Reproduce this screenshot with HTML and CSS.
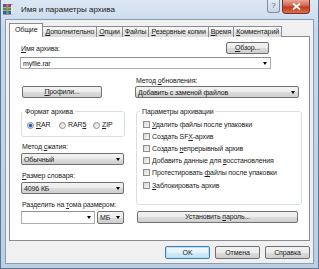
FILE: index.html
```html
<!DOCTYPE html>
<html lang="ru">

<head>
  <meta charset="UTF-8">
  <title>Имя и параметры архива</title>
  <link rel="stylesheet" href="styles.css">
</head>

<body>

  <div class="window">
    <div class="titlebar">
      <svg class="app-icon" width="11" height="11" viewBox="0 0 11 11">
        <rect x="0" y="0" width="10" height="3" fill="#8b3c9e"/>
        <rect x="0" y="3.5" width="10" height="3" fill="#3c9d3f"/>
        <rect x="0" y="7" width="10" height="3.5" fill="#2b5fbf"/>
        <rect x="8" y="0.5" width="2" height="10" fill="#e8e8e8"/>
        <rect x="3.5" y="0" width="2" height="11" fill="#b58a4a"/>
      </svg>
      <span class="title">Имя и параметры архива</span>
      <div class="caption-btns">
        <span class="cap-help">?</span>
        <span class="cap-close">
          <svg width="9" height="7" viewBox="0 0 9 7">
            <path d="M1 0.5 L8 6.5 M8 0.5 L1 6.5" stroke="#fff" stroke-width="1.8"/>
          </svg>
        </span>
      </div>
    </div>

    <div class="client">
      <div class="tabs">
        <span class="tab active">Общие</span>
        <span class="tab"><u>Д</u>ополнительно</span>
        <span class="tab"><u>О</u>пции</span>
        <span class="tab"><u>Ф</u>айлы</span>
        <span class="tab"><u>Р</u>езервные копии</span>
        <span class="tab"><u>В</u>ремя</span>
        <span class="tab"><u>К</u>омментарий</span>
      </div>

      <div class="page">
        <div class="name-row">
          <span class="lbl"><u>И</u>мя архива:</span>
          <span class="btn btn-browse"><u>О</u>бзор...</span>
        </div>
        <div class="combo edit name-combo"><span>myfile.rar</span><i class="arrow"></i></div>

        <div class="cols">
          <div class="col">
            <span class="btn btn-profiles"><u>П</u>рофили...</span>

            <fieldset class="group format">
              <legend>Формат архива</legend>
              <div class="radio-row">
                <label class="opt"><i class="radio checked"></i><span><u>R</u>AR</span></label>
                <label class="opt"><i class="radio"></i><span>RAR<u>5</u></span></label>
                <label class="opt"><i class="radio"></i><span><u>Z</u>IP</span></label>
              </div>
            </fieldset>

            <span class="lbl field-lbl">Метод <u>с</u>жатия:</span>
            <div class="combo list"><span>Обычный</span><i class="arrow"></i></div>

            <span class="lbl field-lbl"><u>Р</u>азмер словаря:</span>
            <div class="combo list"><span>4096 КБ</span><i class="arrow"></i></div>

            <span class="lbl field-lbl">Разделить на <u>т</u>ома размером:</span>
            <div class="split-row">
              <div class="combo edit split-size"><span></span><i class="arrow"></i></div>
              <div class="combo list split-unit"><span>МБ</span><i class="arrow"></i></div>
            </div>
          </div>

          <div class="col">
            <span class="lbl update-lbl">Метод <u>о</u>бновления:</span>
            <div class="combo list update-combo"><span>Добавить с заменой файлов</span><i class="arrow"></i></div>

            <fieldset class="group options">
              <legend>Параметры архивации</legend>
              <label class="check-row"><i class="check"></i><span><u>У</u>далить файлы после упаковки</span></label>
              <label class="check-row"><i class="check"></i><span>Создать SF<u>X</u>-архив</span></label>
              <label class="check-row"><i class="check"></i><span>Создать <u>н</u>епрерывный архив</span></label>
              <label class="check-row"><i class="check"></i><span>Добавить данные для <u>в</u>осстановления</span></label>
              <label class="check-row"><i class="check"></i><span>Протестировать <u>ф</u>айлы после упаковки</span></label>
              <label class="check-row"><i class="check"></i><span><u>З</u>аблокировать архив</span></label>
            </fieldset>

            <span class="btn btn-password">Установить <u>п</u>ароль...</span>
          </div>
        </div>
      </div>

      <div class="footer">
        <span class="btn default">OK</span>
        <span class="btn">Отмена</span>
        <span class="btn">Справка</span>
      </div>
    </div>
  </div>

</body>
</html>
```

FILE: styles.css
```css
* {
  box-sizing: border-box;
}

body {
  margin: 0;
  font-family: 'Liberation Sans', Arial, sans-serif;
  font-size: 7px;
  letter-spacing: -0.12px;
  color: #222;
  background: #fff;
}

u {
  text-decoration-thickness: 1px;
  text-underline-offset: 1px;
}

.window {
  width: 319px;
  height: 269px;
  display: flex;
  flex-direction: column;
  padding: 0 4px 4px 4px;
  background: linear-gradient(#dce7f3, #c6d7eb 30px, #bccfe5);
  border: 1px solid #5f7590;
  border-top: none;
}

.titlebar {
  height: 19px;
  display: flex;
  align-items: center;
}

.app-icon {
  margin: 0 7px 0 -2px;
}

.title {
  font-size: 8px;
  letter-spacing: 0;
  color: #1b1b1b;
}

.caption-btns {
  margin-left: auto;
  margin-right: 4px;
  align-self: flex-start;
  display: flex;
  gap: 2px;
}

.cap-help {
  width: 13px;
  height: 13px;
  border: 1px solid #7d8ea5;
  border-top: none;
  border-radius: 0 0 3px 3px;
  background: linear-gradient(#e4ecf5, #c8d6e7);
  color: #53627a;
  font-size: 8px;
  text-align: center;
  line-height: 12px;
}

.cap-close {
  width: 28px;
  height: 14px;
  border: 1px solid #7a3226;
  border-top: none;
  border-radius: 0 0 4px 4px;
  background: linear-gradient(#e9a899, #d2614a 45%, #c13a1e 55%, #d6704f);
  display: flex;
  align-items: center;
  justify-content: center;
}

.client {
  flex: 1;
  display: flex;
  flex-direction: column;
  background: #f0f0f0;
  border: 1px solid #8a9db5;
  padding: 3px 3px 4px 3px;
}

.tabs {
  display: flex;
  align-items: flex-end;
  height: 14px;
  margin-bottom: -1px;
  position: relative;
  z-index: 1;
}

.tab {
  height: 11px;
  padding: 0 2px;
  margin-left: -1px;
  border: 1px solid #898c95;
  border-bottom: none;
  background: linear-gradient(#f7f7f7, #ececec 50%, #e2e2e2 51%, #dadada);
  line-height: 10px;
  white-space: nowrap;
}

.tab.active {
  height: 14px;
  margin-left: 0;
  padding: 0 5px;
  background: #fff;
  line-height: 12px;
}

.page {
  flex: 1;
  background: #fff;
  border: 1px solid #898c95;
  padding: 5px 0 0 10px;
}

.lbl {
  display: block;
  line-height: 10px;
  white-space: nowrap;
}

.name-row {
  width: 251px;
  padding-right: 2px;
  display: flex;
  justify-content: space-between;
  align-items: flex-end;
}

.name-row .lbl {
  margin-left: 1px;
  line-height: 11px;
}

.btn {
  display: block;
  height: 13px;
  border: 1px solid #707070;
  border-radius: 2px;
  background: linear-gradient(#f3f3f3, #ebebeb 50%, #dddddd 51%, #cfcfcf);
  text-align: center;
  line-height: 11px;
  white-space: nowrap;
}

.btn-browse {
  width: 43px;
  height: 12px;
  line-height: 10px;
}

.combo {
  height: 12px;
  display: flex;
  align-items: center;
  justify-content: space-between;
  padding: 0 3px 0 2px;
  white-space: nowrap;
}

.combo.edit {
  background: #fff;
  border: 1px solid #abadb3;
  border-top-color: #8e8f8f;
}

.combo.list {
  border: 1px solid #707070;
  border-radius: 2px;
  background: linear-gradient(#f3f3f3, #ebebeb 50%, #dddddd 51%, #cfcfcf);
}

.arrow {
  width: 0;
  height: 0;
  border-left: 2.5px solid transparent;
  border-right: 2.5px solid transparent;
  border-top: 3px solid #000;
}

.name-combo {
  width: 251px;
  margin-top: 3px;
}

.cols {
  display: grid;
  grid-template-columns: 105px 166px;
  column-gap: 11px;
  margin-top: 6px;
}

.col {
  display: flex;
  flex-direction: column;
  align-items: flex-start;
}

.btn-profiles {
  width: 80px;
  height: 12px;
  line-height: 10px;
  margin: 11px 0 0 2px;
}

.update-lbl {
  line-height: 11px;
}

.group {
  margin: 9px 0 0;
  border: 1px solid #d5dfe5;
  border-radius: 3px;
  min-width: 0;
}

.group legend {
  padding: 0 2px;
  line-height: 9px;
  margin-left: -4px;
}

.format {
  width: 104px;
  margin-left: 1px;
  padding: 4px 5px 6px;
}

.radio-row {
  display: grid;
  grid-template-columns: 32px 34px auto;
  line-height: 10px;
}

.opt {
  display: flex;
  align-items: center;
  gap: 2px;
}

.radio,
.check {
  width: 7px;
  height: 7px;
  flex: none;
  border: 1px solid #8f8f8f;
  background: linear-gradient(135deg, #d6d6d6, #f8f8f8);
}

.radio {
  border-radius: 50%;
}

.radio.checked {
  background: radial-gradient(circle, #1f4f9e 0, #3b77cf 1.6px, #dfe7f2 2.2px, #eef2f7);
}

.options {
  width: 166px;
  padding: 2px 6px 13px;
}

.options legend {
  margin-left: -3px;
}

.check-row {
  display: flex;
  align-items: center;
  gap: 2px;
  height: 12.2px;
  white-space: nowrap;
}

.btn-password {
  width: 161px;
  height: 12px;
  line-height: 10px;
  margin: 6px 0 0 1px;
}

.field-lbl {
  margin: 5px 0 0 2px;
}

.field-lbl + .combo,
.field-lbl + .split-row {
  margin-top: 1px;
}

.col > .combo.list {
  width: 103px;
  margin-left: 1px;
}

.col > .combo.update-combo {
  width: 164px;
  margin-left: -1px;
}

.col > .combo + .field-lbl {
  margin-top: 6px;
}

.split-row {
  display: flex;
  gap: 2px;
  margin-left: 1px;
}

.split-row .combo {
  height: 13px;
}

.split-size {
  width: 74px;
}

.split-unit {
  width: 27px;
}

.footer {
  display: flex;
  justify-content: flex-end;
  gap: 5px;
  margin-top: 5px;
}

.footer .btn {
  width: 45px;
}

.footer .btn.default {
  border-color: #3c7fb1;
  background: linear-gradient(#f2f8fd, #e3f1fb 50%, #d2eafa 51%, #c4e2f7);
  box-shadow: inset 0 0 0 1px #b8e0f7;
}
```
